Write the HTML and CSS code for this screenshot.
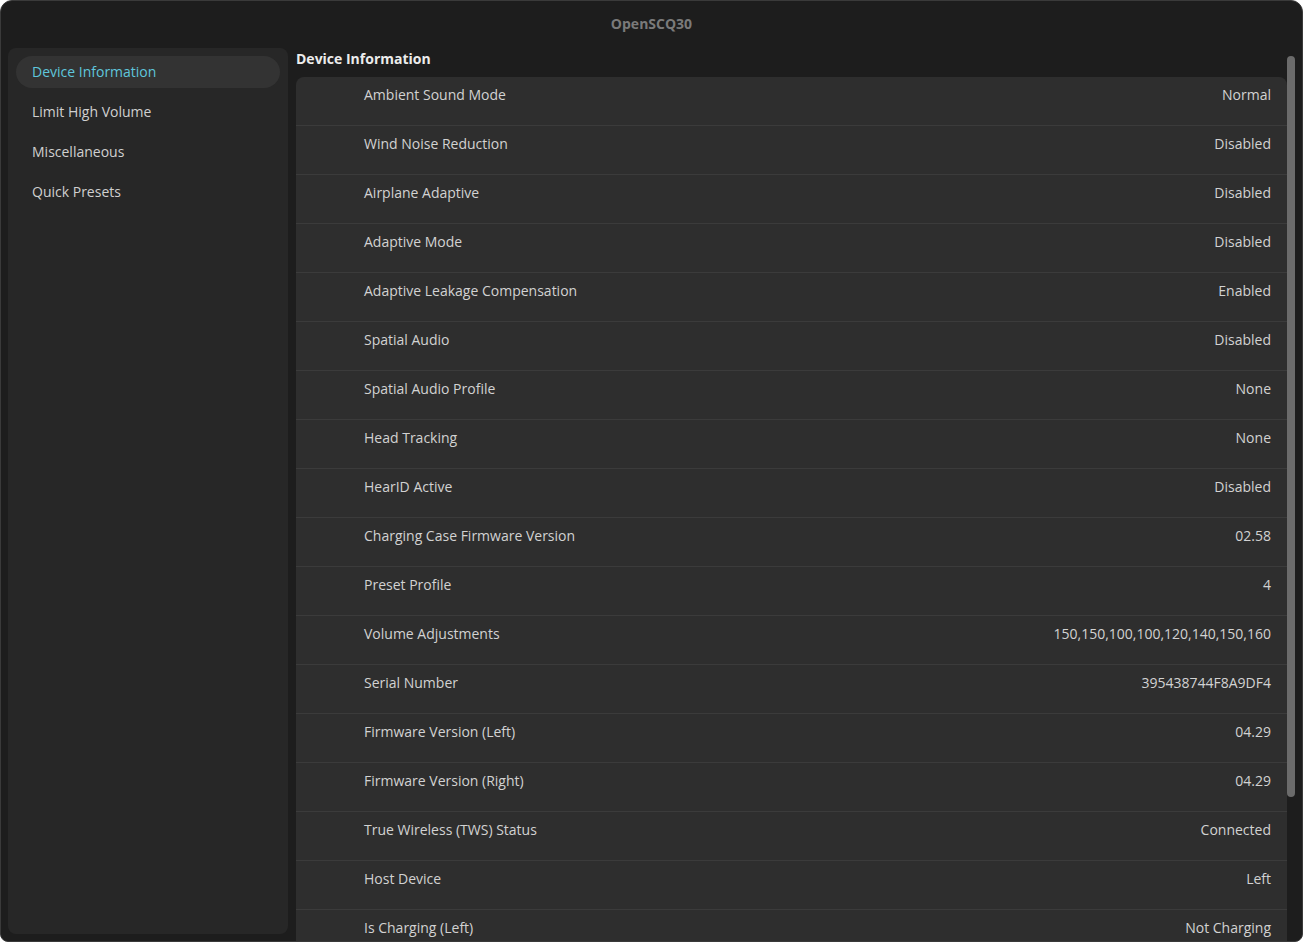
FILE: index.html
```html
<!DOCTYPE html>
<html lang="en">
<head>
  <meta charset="UTF-8">
  <meta name="viewport" content="width=device-width, initial-scale=1.0">
  <title>OpenSCQ30</title>
  <link rel="stylesheet" href="styles.css">
</head>
<body>
  <div class="window">
    <div class="titlebar">OpenSCQ30</div>
    <div class="main">
      <nav class="sidebar">
        <div class="nav-item active">Device Information</div>
        <div class="nav-item">Limit High Volume</div>
        <div class="nav-item">Miscellaneous</div>
        <div class="nav-item">Quick Presets</div>
      </nav>
      <div class="content">
        <h2 class="heading">Device Information</h2>
        <div class="list">
          <div class="row"><span class="label">Ambient Sound Mode</span><span class="value">Normal</span></div>
          <div class="row"><span class="label">Wind Noise Reduction</span><span class="value">Disabled</span></div>
          <div class="row"><span class="label">Airplane Adaptive</span><span class="value">Disabled</span></div>
          <div class="row"><span class="label">Adaptive Mode</span><span class="value">Disabled</span></div>
          <div class="row"><span class="label">Adaptive Leakage Compensation</span><span class="value">Enabled</span></div>
          <div class="row"><span class="label">Spatial Audio</span><span class="value">Disabled</span></div>
          <div class="row"><span class="label">Spatial Audio Profile</span><span class="value">None</span></div>
          <div class="row"><span class="label">Head Tracking</span><span class="value">None</span></div>
          <div class="row"><span class="label">HearID Active</span><span class="value">Disabled</span></div>
          <div class="row"><span class="label">Charging Case Firmware Version</span><span class="value">02.58</span></div>
          <div class="row"><span class="label">Preset Profile</span><span class="value">4</span></div>
          <div class="row"><span class="label">Volume Adjustments</span><span class="value">150,150,100,100,120,140,150,160</span></div>
          <div class="row"><span class="label">Serial Number</span><span class="value">395438744F8A9DF4</span></div>
          <div class="row"><span class="label">Firmware Version (Left)</span><span class="value">04.29</span></div>
          <div class="row"><span class="label">Firmware Version (Right)</span><span class="value">04.29</span></div>
          <div class="row"><span class="label">True Wireless (TWS) Status</span><span class="value">Connected</span></div>
          <div class="row"><span class="label">Host Device</span><span class="value">Left</span></div>
          <div class="row"><span class="label">Is Charging (Left)</span><span class="value">Not Charging</span></div>
        </div>
      </div>
      <div class="scrollbar"><div class="thumb"></div></div>
    </div>
  </div>
</body>
</html>
```

FILE: styles.css
```css
html, body {
  margin: 0;
  height: 100%;
  background: #ffffff;
  overflow: hidden;
}
body {
  font-family: "Open Sans", "Noto Sans", sans-serif;
  font-size: 14px;
  color: #d6d6d6;
}
.window {
  box-sizing: border-box;
  height: 942px;
  background: #1d1d1d;
  border: 1px solid #3a3a3a;
  border-radius: 12px 12px 8px 8px;
  overflow: hidden;
  display: flex;
  flex-direction: column;
}
.titlebar {
  height: 45px;
  padding-bottom: 2px;
  flex: none;
  display: flex;
  align-items: center;
  justify-content: center;
  font-weight: 700;
  font-size: 14px;
  color: #7a7a7a;
}
.main {
  flex: 1;
  display: flex;
  padding: 0 0 0 7px;
  min-height: 0;
}
.sidebar {
  width: 264px;
  flex: none;
  background: #272727;
  border-radius: 8px;
  padding: 8px;
  margin-bottom: 7px;
  display: flex;
  flex-direction: column;
  gap: 8px;
}
.nav-item {
  height: 32px;
  line-height: 32px;
  padding: 0 16px;
  border-radius: 16px;
  color: #d0d0d0;
}
.nav-item.active {
  background: #333333;
  color: #5fc6dc;
}
.content {
  flex: 1;
  padding-left: 8px;
  min-width: 0;
}
.heading {
  margin: 1px 0 0;
  height: 28px;
  line-height: 20px;
  font-size: 14px;
  font-weight: 700;
  color: #ececec;
}
.list {
  background: #2e2e2e;
  border-radius: 8px 8px 0 0;
}
.row {
  border-bottom: 1px solid #3b3b3b;
  display: flex;
  justify-content: space-between;
  padding: 8px 16px 0 68px;
  height: 40px;
  line-height: 20px;
}
.label, .value {
  color: #d2d2d2;
}
.scrollbar {
  width: 15px;
  flex: none;
  padding-top: 8px;
}
.thumb {
  width: 8px;
  height: 741px;
  background: #6b6b6b;
  border-radius: 4px;
}
```
